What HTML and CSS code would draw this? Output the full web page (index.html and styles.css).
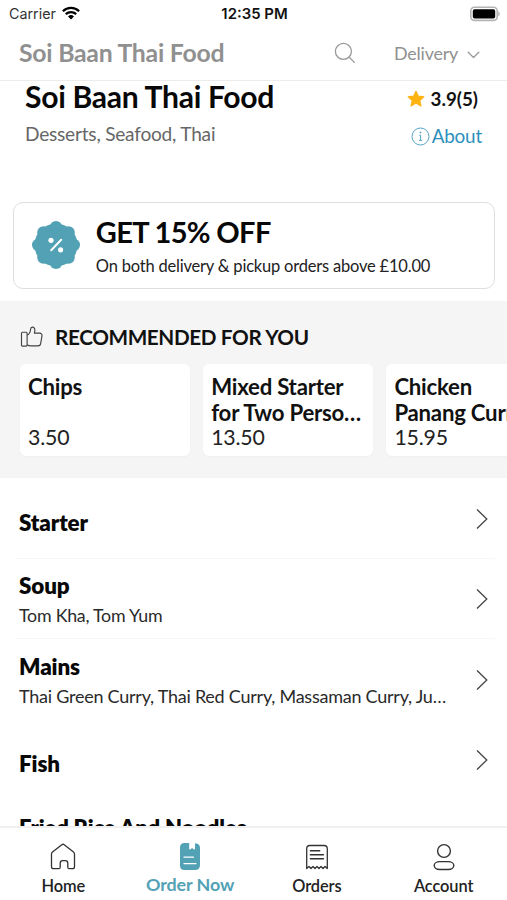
FILE: index.html
```html
<!DOCTYPE html>
<html lang="en">
<head>
<meta charset="utf-8">
<title>Soi Baan Thai Food</title>
<link rel="stylesheet" href="styles.css">
</head>
<body>
<div class="app">
  <div class="status">
    <div class="status-left">
      <span class="carrier">Carrier</span>
      <svg class="wifi" width="18" height="14" viewBox="0 0 18 14" fill="none" stroke="#000" stroke-width="2.3"><path d="M.9 5.2a11.6 11.6 0 0 1 16.2 0"/><path d="M3.8 8.2a7.5 7.5 0 0 1 10.4 0"/><path d="M9 13.6 6 10.5a4.3 4.3 0 0 1 6 0z" fill="#000" stroke="none"/></svg>
    </div>
    <span class="clock">12:35 PM</span>
    <svg class="battery" width="31" height="16" viewBox="0 0 31 16"><rect x="1.8" y="1.2" width="26.4" height="13.2" rx="3.6" fill="#fff" stroke="#b4b4b4" stroke-width="1.6"/><rect x="3.8" y="3.2" width="22.4" height="9.4" rx="1.8"/><path d="M29.4 5.6c1.7.6 1.7 4 0 4.6z" fill="#a9a9a9"/></svg>
  </div>

  <header class="topbar">
    <span class="topbar-title">Soi Baan Thai Food</span>
    <svg class="search" width="22" height="22" viewBox="0 0 22 22" fill="none" stroke="#999" stroke-width="1.3" stroke-linecap="round"><circle cx="9.4" cy="9.4" r="8"/><path d="m15.2 15.2 5.2 5.2"/></svg>
    <span class="mode">Delivery</span>
    <svg class="mode-arrow" width="13" height="8" viewBox="0 0 13 8" fill="none" stroke="#999" stroke-width="1.3" stroke-linecap="round" stroke-linejoin="round"><path d="m1.2 1.2 5.3 5.3 5.3-5.3"/></svg>
  </header>

  <main class="content">
    <section class="info">
      <div class="info-row">
        <h1 class="name">Soi Baan Thai Food</h1>
        <div class="rating">
          <svg width="18" height="18" viewBox="0 0 18 18" fill="#ffb30f" stroke="#ffb30f" stroke-width="1.2" stroke-linejoin="round"><path d="m9 1.2 2.3 5 5.5.6-4.1 3.7 1.2 5.4L9 13.1l-4.9 2.8 1.2-5.4-4.1-3.7 5.5-.6z"/></svg>
          <span>3.9(5)</span>
        </div>
      </div>
      <div class="info-row second">
        <span class="cuisine">Desserts, Seafood, Thai</span>
        <a class="about">
          <svg width="19" height="19" viewBox="0 0 19 19" fill="none" stroke="#55a5c8" stroke-width="1"><circle cx="9.5" cy="9.5" r="8.5"/><path d="M9.6 8.2v5M8.2 8.2h1.4M8 13.4h3.2"/><circle cx="9.5" cy="5.6" r=".5" fill="#55a5c8"/></svg>
          <span>About</span>
        </a>
      </div>
    </section>

    <section class="offer">
      <svg class="badge" width="50" height="50" viewBox="-25 -25 50 50"><g fill="#52a1b5"><circle r="21.5"/><g id="lobes"><circle cy="-17.8" r="6.2"/><circle cy="17.8" r="6.2"/><circle cx="-17.8" r="6.2"/><circle cx="17.8" r="6.2"/></g><use href="#lobes" transform="rotate(45)"/></g><g fill="#fff"><circle cx="-5" cy="-4.7" r="2.6"/><circle cx="4.6" cy="4.8" r="2.6"/><path d="m-4.8 5.2 10-10.4" stroke="#fff" stroke-width="2" stroke-linecap="round"/></g></svg>
      <div>
        <h2 class="offer-title">GET 15% OFF</h2>
        <p class="offer-text">On both delivery &amp; pickup orders above £10.00</p>
      </div>
    </section>

    <section class="recommended">
      <div class="rec-head">
        <svg width="24" height="22" viewBox="0 0 24 22" fill="none" stroke="#444" stroke-width="1.15" stroke-linejoin="round"><path d="M2.5 6.2h3.6q1 0 1 1v11.9q0 1-1 1H2.5q-1 0-1-1V7.2q0-1 1-1z"/><path d="M7.1 9.3c2.5-1.1 3.3-3.6 3.5-6 .1-1.6.8-2.2 1.7-2.2 1.8 0 2.8 1.6 2.5 3.7l-.4 2.3h5.2c1.5 0 2.6 1.1 2.4 2.6l-1.3 7.6c-.2 1.5-1 2.5-2.6 2.5h-7.5c-1.3 0-2.5-.5-3.500-1.100"/></svg>
        <h2>RECOMMENDED FOR YOU</h2>
      </div>
      <div class="rec-list">
        <article class="rec-card"><h3>Chips</h3><p>3.50</p></article>
        <article class="rec-card"><h3>Mixed Starter<br>for Two Perso…</h3><p>13.50</p></article>
        <article class="rec-card"><h3>Chicken<br>Panang Curry</h3><p>15.95</p></article>
      </div>
    </section>

    <section class="menu">
      <div class="row single"><div class="row-text"><h3>Starter</h3></div><svg class="chev" width="12" height="22" viewBox="0 0 12 22"><path d="m1 1.5 9.800 9.500L1 20.500"/></svg></div>
      <div class="row"><div class="row-text"><h3>Soup</h3><p>Tom Kha, Tom Yum</p></div><svg class="chev" width="12" height="22" viewBox="0 0 12 22"><path d="m1 1.500 9.800 9.500L1 20.500"/></svg></div>
      <div class="row plain"><div class="row-text"><h3>Mains</h3><p class="long">Thai Green Curry, Thai Red Curry, Massaman Curry, Ju…</p></div><svg class="chev" width="12" height="22" viewBox="0 0 12 22"><path d="m1 1.500 9.800 9.500L1 20.500"/></svg></div>
      <div class="row single plain"><div class="row-text"><h3>Fish</h3></div><svg class="chev" width="12" height="22" viewBox="0 0 12 22"><path d="m1 1.500 9.800 9.500L1 20.500"/></svg></div>
      <div class="row plain"><div class="row-text"><h3 class="wide">Fried Rice And Noodles</h3></div></div>
    </section>
  </main>

  <nav class="tabs">
    <a class="tab">
      <svg width="28" height="28" viewBox="0 0 28 28" fill="none" stroke="#333" stroke-width="1.3" stroke-linejoin="round"><path d="M2.5 11.2q0-1.3 1-2.1L12.8 1.7q1.2-.9 2.4 0l9.3 7.4q1 .8 1 2.1V23.7q0 2-2 2h-3.2q-1.5 0-1.5-1.5v-4q0-2.5-2.5-2.5h-2.6q-2.5 0-2.5 2.5v4q0 1.5-1.5 1.5H4.5q-2 0-2-2z"/></svg>
      <span>Home</span>
    </a>
    <a class="tab active">
      <svg width="28" height="28" viewBox="0 0 28 28"><path fill="#52a1b5" d="M8.5 0h4.7v5.6q0 1.6 1.3.6l1.6-1.2 1.6 1.2q1.3 1 1.3-.6V.2q5 .3 5 4.800v17q0 5-5 5h-10.500q-4.500 0-4.500-4.500v-18q0-4.500 4.500-4.500z"/><path stroke="#fff" stroke-width="1.3" stroke-linecap="round" d="M8 14.200h9.500M8 20.600h12"/></svg>
      <span>Order Now</span>
    </a>
    <a class="tab">
      <svg width="28" height="28" viewBox="0 0 28 28" fill="none" stroke="#333" stroke-width="1.3" stroke-linejoin="round" stroke-linecap="round"><path d="M3.7 25.500V5.700q0-3.200 3.200-3.200h14.200q3.200 0 3.200 3.200V25.500l-2.300-2-2 2-2-2-2 2-2-2-2 2-2-2-2 2-2-2z"/><path d="M7.400 7.700h9.300M7.400 11.700h13M7.400 15.700h13" stroke-width="1.500"/></svg>
      <span>Orders</span>
    </a>
    <a class="tab">
      <svg width="28" height="28" viewBox="0 0 28 28" fill="none" stroke="#333" stroke-width="1.4"><circle cx="14" cy="8" r="6.400"/><rect x="4.200" y="18.600" width="19.600" height="7.900" rx="5.500" ry="3.950"/></svg>
      <span>Account</span>
    </a>
  </nav>
</div>
</body>
</html>
```
FILE: styles.css
```css
* { box-sizing: border-box; }
body, h1, h2, h3, p { margin: 0; }
body {
  font-family: Lato, "Liberation Sans", sans-serif;
  color: #111;
  background: #fff;
}
svg { display: block; flex: none; }
.app {
  width: 507px;
  height: 900px;
  display: flex;
  flex-direction: column;
  overflow: hidden;
}

/* status bar */
.status {
  height: 28px;
  flex: none;
  display: grid;
  grid-template-columns: 1fr auto 1fr;
  align-items: center;
  padding: 0 7px 0 9px;
  font-family: Inter, "Liberation Sans", sans-serif;
  color: #111;
}
.status-left { display: flex; align-items: center; gap: 6px; }
.carrier { font-size: 14.3px; color: #333; margin-top: -1px; }
.wifi { margin-top: -2px; }
.clock { font-size: 14.9px; font-weight: 600; margin-top: -1px; }
.battery { justify-self: end; margin-top: -1px; }

/* top bar */
.topbar {
  height: 53px;
  flex: none;
  display: flex;
  align-items: center;
  padding: 0 27px 2px 19px;
  border-bottom: 1px solid #ececec;
  color: #909090;
}
.topbar-title { font-size: 24.8px; font-weight: 700; line-height: 30px; letter-spacing: -.25px; }
.search { margin: -1px 38px 0 auto; }
.mode { font-size: 17.9px; line-height: 24px; margin-top: -1px; letter-spacing: -.2px; }
.mode-arrow { margin: 3px 0 0 9px; }

/* restaurant */
.content { flex: 1; min-height: 0; overflow: hidden; }
.info { padding: 0 25px; height: 121px; }
.info-row {
  display: flex;
  justify-content: space-between;
  align-items: center;
  height: 31px;
}
.info-row.second { height: 42px; }
.name { font-size: 30.1px; font-weight: 700; line-height: 30px; letter-spacing: -.3px; margin-top: -2px; color: #080808; }
.rating {
  display: flex;
  align-items: center;
  gap: 6px;
  padding: 5px 4px 0 0;
  font-size: 18.8px;
  font-weight: 700;
  line-height: 24px;
}
.cuisine { font-size: 19.1px; line-height: 24px; letter-spacing: -.22px; margin-top: 1px; color: #666; }
.about {
  display: flex;
  align-items: center;
  gap: 2px;
  padding-top: 6px;
  font-size: 18.9px;
  line-height: 24px;
  letter-spacing: -.2px;
  color: #2c8fbb;
}

/* offer */
.offer {
  height: 87px;
  margin: 0 12px 12px 13px;
  padding: 0 17.3px 1px;
  display: flex;
  align-items: center;
  gap: 14.5px;
  border: 1px solid #dedede;
  border-radius: 10px;
}
.offer-title { font-size: 29px; font-weight: 700; line-height: 36px; letter-spacing: -.65px; color: #080808; }
.offer-text { font-size: 16.5px; line-height: 20px; letter-spacing: -.2px; margin-top: 6px; color: #222; }

/* recommended */
.recommended {
  height: 177px;
  padding-top: 24px;
  background: #f5f5f5;
  overflow: hidden;
}
.rec-head { display: flex; align-items: center; gap: 11px; padding-left: 20px; height: 24px; }
.rec-head h2 { font-size: 20.7px; font-weight: 700; line-height: 24px; letter-spacing: -.37px; }
.rec-list { display: flex; gap: 13px; padding: 15px 0 0 20px; }
.rec-card {
  width: 170.2px;
  height: 92px;
  flex: none;
  padding: 10.2px 0 0 8px;
  background: #fff;
  border-radius: 6px;
  display: flex;
  flex-direction: column;
  box-shadow: 0 1px 2px rgba(0, 0, 0, .03);
  white-space: nowrap;
}
.rec-card h3 { height: 51px; font-size: 22.2px; font-weight: 700; line-height: 25.5px; letter-spacing: -.23px; }
.rec-card p { font-size: 21.3px; line-height: 25px; letter-spacing: -.2px; color: #222; }

/* menu */
.row {
  height: 80.5px;
  margin: 0 12px 0 15px;
  padding: 14.5px 7px 0 4px;
  display: flex;
  justify-content: space-between;
  border-bottom: 1px solid #f7f7f7;
}
.row.plain { border-bottom-color: transparent; }
.row h3 { font-size: 22.4px; font-weight: 800; line-height: 26px; letter-spacing: -.12px; color: #080808; }
.row.single h3 { margin-top: 17px; }
.row .wide { font-size: 22px; letter-spacing: -.15px; }
.row p { font-size: 17.8px; line-height: 22px; letter-spacing: -.24px; margin-top: 5px; color: #2a2a2a; white-space: nowrap; }
.row .long { font-size: 18px; }
.chev { fill: none; stroke: #444; stroke-width: 1.3; margin-top: 15px; }

/* tabs */
.tabs {
  height: 74px;
  flex: none;
  display: grid;
  grid-template-columns: repeat(4, 1fr);
  border-top: 2px solid #f0f0f0;
  background: #fff;
}
.tab {
  display: flex;
  flex-direction: column;
  align-items: center;
  padding-top: 15px;
  font-size: 16.4px;
  font-weight: 600;
  line-height: 22px;
  letter-spacing: -.1px;
  color: #222;
}
.tab span { margin-top: 4px; }
.tab.active { font-size: 17.9px; font-weight: 700; color: #52a1b5; }
.tab.active span { margin-top: 2px; }
```
